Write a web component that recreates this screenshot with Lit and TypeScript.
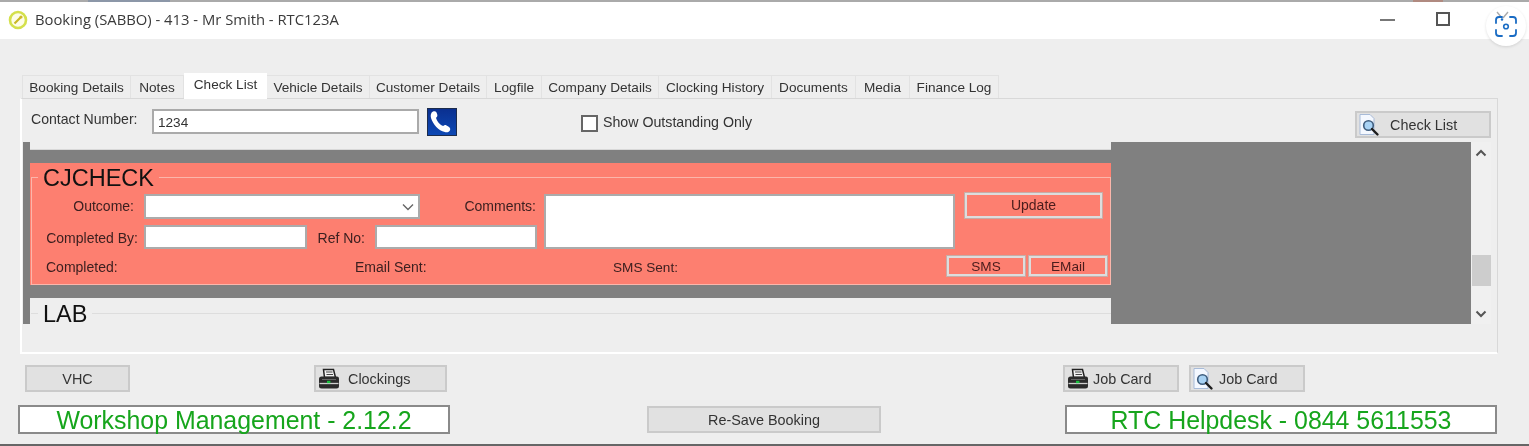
import { LitElement, html, css, svg } from "lit";
import { customElement } from "lit/decorators.js";

const TABS: [string, number][] = [
  ["Booking Details", 109], ["Notes", 53], ["Check List", 83], ["Vehicle Details", 103],
  ["Customer Details", 117], ["Logfile", 55], ["Company Details", 117], ["Clocking History", 113],
  ["Documents", 84], ["Media", 54], ["Finance Log", 89],
];

const printer = svg`<svg class="ico" viewBox="0 0 22 22" width="22" height="22">
  <path d="M5.500 1.500h10l2 8h-11z" fill="#f2f2f2" stroke="#222" stroke-width="1.500"/>
  <path d="M8 4h6.500M8.500 6.500h6.500" stroke="#444" stroke-width="1.100"/>
  <path d="M3.500 8.500h15.500a2 2 0 0 1 2 2V18a2.500 2.500 0 0 1-2.500 2.500h-15A2.500 2.500 0 0 1 1 18v-7a2.500 2.500 0 0 1 2.500-2.500z" fill="#2b2b2b"/>
  <path d="M1.500 15.500h19" stroke="#cfcfcf" stroke-width="1.300"/>
  <path d="M4 11.500h14" stroke="#666" stroke-width="1"/>
  <rect x="9" y="12.800" width="3.400" height="2.400" fill="#16c23c"/>
</svg>`;

const lens = svg`<svg class="ico" viewBox="0 0 22 24" width="22" height="24">
  <path d="M2 1.500h10l4 4v16H2z" fill="#f4f8ff" stroke="#a8bbd8" stroke-width="1"/>
  <circle cx="10.500" cy="12.500" r="4.800" fill="#a8d2f4" stroke="#3f5d7e" stroke-width="1.600"/>
  <path d="M14 16l5.500 5.500" stroke="#1d1d1d" stroke-width="2.400" stroke-linecap="round"/>
</svg>`;

@customElement("app-root")
export class AppRoot extends LitElement {
  static styles = css`
    :host { display: block; width: 1529px; height: 446px; overflow: hidden; position: relative; background: #eee; }
    * { box-sizing: border-box; }
    .soft { filter: blur(0.55px); width: 1529px; height: 446px; display: flex; flex-direction: column; font: 13.6px "Liberation Sans", Arial, sans-serif; color: #333; background: #eee; }
    .topline { height: 2px; flex: none; background: linear-gradient(90deg, #aaa 0 88px, #8c97a8 88px 170px, #aaa 170px 1413px, #b08a80 1413px 1443px, #aaa 1443px); }
    .titlebar { height: 37px; flex: none; background: #fff; display: flex; align-items: center; padding-left: 8px; font: 14.8px "Open Sans", sans-serif; color: #3a3a3a; }
    .titlebar span { margin-left: 7px; margin-top: -3px; }
    .appicon { margin-top: -2px; }
    .winbtns { margin-left: auto; display: flex; align-items: center; margin-top: -2px; }
    .min { width: 15px; height: 2px; background: #777; margin-right: 41px; }
    .max { width: 14px; height: 14px; border: 2px solid #555; margin-right: 79px; margin-top: -2px; }
    .tabs { display: flex; align-items: flex-end; height: 25px; margin: 34px 0 0 22px; flex: none; position: relative; z-index: 1; }
    .tab { height: 23px; text-align: center; line-height: 24px; background: #eee; border: 1px solid #e2e2e2; border-bottom: none; border-left: none; white-space: nowrap; }
    .tab:first-child { border-left: 1px solid #e2e2e2; }
    .tab.active { height: 26px; line-height: 24px; background: #fff; border: none; margin-bottom: -1px; }
    .panel { margin-left: 20px; width: 1478px; height: 256px; flex: none; border-top: 1px solid #d8d8d8; border-right: 1px solid #d8d8d8; border-left: 2px solid #fff; border-bottom: 2px solid #fff; background: #eee; display: flex; flex-direction: column; }
    .toolbar { height: 43px; flex: none; display: flex; align-items: flex-start; }
    .clabel { margin: 12px 0 0 9px; width: 121px; font-size: 14.100px; white-space: nowrap; }
    .cinput { margin-top: 10px; width: 267px; height: 25px; background: #fff; border: 2px solid #aaa; padding: 4px 0 0 4px; line-height: 16px; }
    .phone { margin: 9px 0 0 8px; width: 30px; height: 28px; }
    .check { margin: 16px 0 0 124px; width: 17px; height: 17px; border: 2px solid #666; background: #fff; }
    .clabel2 { margin: 15px 0 0 5px; font-size: 14.200px; }
    .btn { display: flex; align-items: center; justify-content: center; background: #e1e1e1; border: 2px solid #cacaca; white-space: nowrap; flex: none; font-size: 14.400px; }
    .btn.iconed { justify-content: flex-start; }
    .btn-check { margin: 12px 0 0 603px; width: 136px; height: 27px; padding-left: 1px; }
    .btn-check .ico { margin-right: 10px; }
    .scroller { margin-left: 1px; width: 1468px; height: 182px; flex: none; display: flex; background: #808080; }
    .main { margin-left: 7px; width: 1081px; flex: none; display: flex; flex-direction: column; }
    .prev { height: 8px; flex: none; background: #eee; border-bottom: 1px solid #d8d8d8; }
    .card { flex: none; background: #fd7f70; height: 122px; margin-top: 13px; padding-left: 1px; overflow: hidden; }
    fieldset { margin: -1px 0 0; padding: 0; min-width: 0; border: 1px solid #fbb6ab; height: 123px; }
    legend { margin-left: 6px; padding: 2px 5px 0; font-size: 23.500px; line-height: 28px; color: #111; }
    .fgrid { display: grid; grid-template-columns: 112px 163px 68px 45px 117px 7px 411px 1fr; grid-template-rows: 25px 24px; row-gap: 6px; margin-top: 2px; font-size: 14px; }
    .rlabel { text-align: right; padding-right: 10px; line-height: 24px; color: #3d2020; white-space: nowrap; }
    .l-out { grid-column: 1; grid-row: 1; }
    .l-by { grid-column: 1; grid-row: 2; padding-right: 6px; padding-top: 1px; }
    .field { background: #fff; border: 2px solid #ababab; position: relative; }
    .select { grid-column: 2 / 5; grid-row: 1; }
    .select svg { position: absolute; right: 4px; top: 7px; }
    .lcomments { grid-column: 4 / 7; grid-row: 1; padding-right: 8px; }
    .area { grid-column: 7; grid-row: 1 / 3; }
    .by-in { grid-column: 2; grid-row: 2; }
    .ref-l { grid-column: 3; grid-row: 2; padding-top: 1px; }
    .ref-in { grid-column: 4 / 6; grid-row: 2; }
    .update { grid-column: 8; grid-row: 1; margin: -1px 8px 1px 10px; padding-bottom: 2px; }
    .sbtn { background: #fd7f70; border: 2px solid #ddd; box-shadow: 0 0 0 1px #c8aca6; color: #4a1c1c; display: flex; align-items: center; justify-content: center; }
    .row3 { display: flex; align-items: center; height: 20px; margin-top: 7px; padding-left: 14px; color: #3d2020; font-size: 14px; }
    .row3 .c1 { width: 309px; margin-top: 2px; }
    .row3 .c2 { width: 258px; margin-top: 2px; }
    .row3 .c3 { margin-top: 2px; font-size: 13.600px; }
    .row3 .btns { margin-left: auto; margin-right: 3px; display: flex; gap: 4px; }
    .sms, .email { width: 78px; height: 20px; padding-top: 1px; font-size: 13.600px; }
    .labcard { flex: none; background: #eee; height: 26px; margin-top: 13px; padding-left: 1px; }
    .labcard fieldset { margin: 0; border: none; border-top: 1px solid #ddd; height: 26px; }
    .labcard legend { margin-left: 7px; }
    .dead { width: 360px; flex: none; }
    .bar { width: 20px; flex: none; background: #f0f0f0; display: flex; flex-direction: column; align-items: center; }
    .bar .up { margin-top: 7px; }
    .thumb { margin-top: 98px; width: 19px; height: 31px; background: #cdcdcd; flex: none; }
    .bar .dn { margin-top: 24px; }
    .row-a { display: flex; height: 27px; margin-top: 11px; flex: none; }
    .vhc { margin-left: 25px; width: 105px; }
    .clock { margin-left: 184px; width: 133px; padding-left: 2px; }
    .clock .ico { margin-right: 8px; }
    .job1 { margin-left: 616px; width: 116px; padding-left: 2px; }
    .job1 .ico { margin-right: 4px; }
    .job2 { margin-left: 10px; width: 116px; padding-left: 1px; }
    .job2 .ico { margin-right: 5px; }
    .row-b { display: flex; align-items: center; height: 29px; margin-top: 13px; flex: none; }
    .status { width: 432px; height: 29px; padding-top: 1px; background: #fff; border: 2px solid #8a8a8a; color: #16a51c; font-size: 24.900px; display: flex; align-items: center; justify-content: center; flex: none; white-space: nowrap; }
    .s1 { margin-left: 18px; }
    .resave { margin-left: 197px; width: 234px; height: 27px; }
    .s2 { margin-left: 184px; }
    .baseline { height: 2px; background: #666; margin-top: 10px; flex: none; }
    .lensbadge { position: absolute; left: 1486px; top: 6px; width: 40px; height: 40px; border-radius: 50%; background: #fff; box-shadow: 0 1px 3px rgba(0,0,0,.12); }
    .lensbadge svg { display: block; }
  `;

  render() {
    return html`
      <div class="soft">
        <div class="topline"></div>
        <div class="titlebar">
          <svg class="appicon" width="20" height="20" viewBox="0 0 20 20"><circle cx="10" cy="10" r="8" fill="#fdfde8" stroke="#d4e04c" stroke-width="2.600"/><path d="M6.500 13.500L12.500 7.500" stroke="#c8b824" stroke-width="2.200"/><circle cx="13" cy="7" r="1.600" fill="#d0b82a"/></svg>
          <span>Booking (SABBO) - 413 - Mr Smith - RTC123A</span>
          <div class="winbtns"><div class="min"></div><div class="max"></div></div>
        </div>
        <div class="tabs">
          ${TABS.map(([t, w]) => html`<div class="tab ${t === "Check List" ? "active" : ""}" style="width:${w}px">${t}</div>`)}
        </div>
        <div class="panel">
          <div class="toolbar">
            <div class="clabel">Contact Number:</div>
            <div class="cinput">1234</div>
            <svg class="phone" viewBox="0 0 30 28">
              <defs><linearGradient id="pg" x1="0" y1="0" x2="0" y2="1"><stop offset="0" stop-color="#0a2f8f"/><stop offset="1" stop-color="#0d49b5"/></linearGradient></defs>
              <rect x=".5" y=".5" width="29" height="27" fill="url(#pg)" stroke="#1c2c4c"/>
              <path d="M6 3.500c2.500-.8 3.600.2 4.300 3.200.3 1.500-.3 2.400-1.300 3.100.8 3.500 3.800 7 7.200 8.300 1-.9 2-1.300 3.300-.7 2.700 1.300 4.300 2.400 3.600 4.600-.6 1.900-3 2.700-5.300 2.100C11.500 22.500 6.200 16.500 4 10c-.7-2.500-.2-5.500 2-6.500z" fill="#fff"/>
            </svg>
            <div class="check"></div>
            <div class="clabel2">Show Outstanding Only</div>
            <div class="btn iconed btn-check">${lens}Check List</div>
          </div>
          <div class="scroller">
            <div class="main">
              <div class="prev"></div>
              <div class="card">
                <fieldset>
                  <legend>CJCHECK</legend>
                  <div class="fgrid">
                    <div class="rlabel l-out">Outcome:</div>
                    <div class="field select"><svg width="12" height="8" viewBox="0 0 12 8"><path d="M1 1.500l5 5 5-5" fill="none" stroke="#666" stroke-width="1.400"/></svg></div>
                    <div class="rlabel lcomments">Comments:</div>
                    <div class="field area"></div>
                    <div class="sbtn update">Update</div>
                    <div class="rlabel l-by">Completed By:</div>
                    <div class="field by-in"></div>
                    <div class="rlabel ref-l">Ref No:</div>
                    <div class="field ref-in"></div>
                  </div>
                  <div class="row3">
                    <div class="c1">Completed:</div>
                    <div class="c2">Email Sent:</div>
                    <div class="c3">SMS Sent:</div>
                    <div class="btns"><div class="sbtn sms">SMS</div><div class="sbtn email">EMail</div></div>
                  </div>
                </fieldset>
              </div>
              <div class="labcard"><fieldset><legend>LAB</legend></fieldset></div>
            </div>
            <div class="dead"></div>
            <div class="bar">
              <svg class="up" width="12" height="8" viewBox="0 0 12 8"><path d="M1.500 6.500L6 2l4.500 4.500" fill="none" stroke="#555" stroke-width="2"/></svg>
              <div class="thumb"></div>
              <svg class="dn" width="12" height="8" viewBox="0 0 12 8"><path d="M1.500 1.500L6 6l4.500-4.500" fill="none" stroke="#555" stroke-width="2"/></svg>
            </div>
          </div>
        </div>
        <div class="row-a">
          <div class="btn vhc">VHC</div>
          <div class="btn iconed clock">${printer}Clockings</div>
          <div class="btn iconed job1">${printer}Job Card</div>
          <div class="btn iconed job2">${lens}Job Card</div>
        </div>
        <div class="row-b">
          <div class="status s1">Workshop Management - 2.12.2</div>
          <div class="btn resave">Re-Save Booking</div>
          <div class="status s2">RTC Helpdesk - 0844 5611553</div>
        </div>
        <div class="baseline"></div>
      </div>
      <div class="lensbadge">
        <svg width="40" height="40" viewBox="0 0 40 40">
          <path d="M11 6l5 6M22 6l-5 6" stroke="#aaa" stroke-width="1.400"/>
          <path d="M16 11h-3a3 3 0 0 0-3 3v3M24 11h3a3 3 0 0 1 3 3v3M16 30h-3a3 3 0 0 1-3-3v-3M24 30h3a3 3 0 0 0 3-3v-3" fill="none" stroke="#1a6cc4" stroke-width="1.800" stroke-linecap="round"/>
          <circle cx="20" cy="20.500" r="2.300" fill="none" stroke="#1a6cc4" stroke-width="1.600"/>
          <circle cx="16" cy="13.500" r="1.200" fill="#1a6cc4"/>
        </svg>
      </div>
    `;
  }
}
